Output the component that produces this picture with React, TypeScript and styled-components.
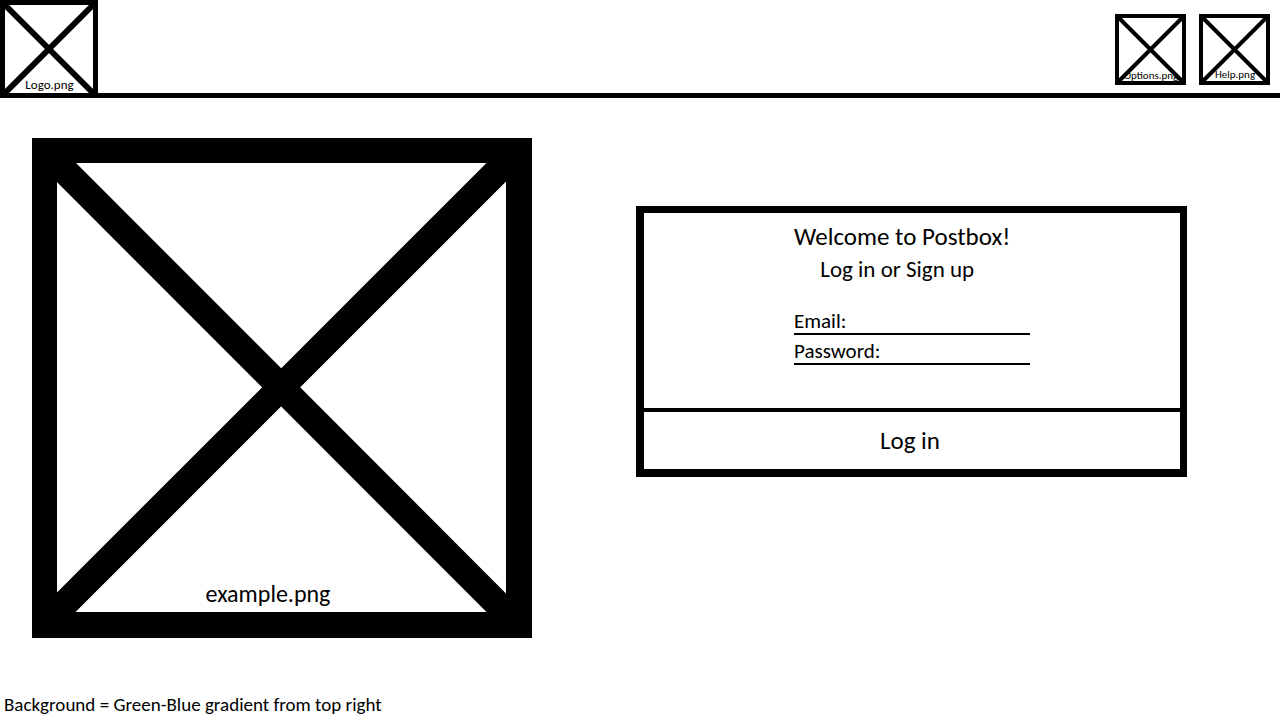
import React from "react";
import styled, { createGlobalStyle } from "styled-components";

const GlobalStyle = createGlobalStyle`
  *, *::before, *::after { box-sizing: border-box; }
  body {
    margin: 0;
    background: #fff;
    color: #000;
    font-family: Carlito, Lato, "Liberation Sans", sans-serif;
  }
`;

const Page = styled.div`
  display: flex;
  flex-direction: column;
  min-height: 100vh;
`;

const Header = styled.header`
  display: flex;
  align-items: flex-start;
  justify-content: space-between;
  box-shadow: inset 0 -5px #000;
`;

const HeaderActions = styled.nav`
  display: flex;
  gap: 13px;
  padding: 14px 10px 0 0;
`;

const HomeLink = styled.a`
  position: relative;
  display: block;
  width: 98px;
  color: inherit;
  text-decoration: none;
`;

const IconButton = styled.button`
  position: relative;
  display: block;
  width: 71px;
  padding: 0;
  border: 0;
  background: none;
  color: inherit;
  font-family: inherit;
  cursor: pointer;
`;

const Drawing = styled.svg`
  display: block;
  width: 100%;
  height: auto;
`;

const Caption = styled.span<{ $size: number; $line: number; $bottom: number }>`
  position: absolute;
  right: 0;
  bottom: ${(p) => p.$bottom}px;
  left: 1px;
  font-size: ${(p) => p.$size}px;
  line-height: ${(p) => p.$line}px;
  text-align: center;
  white-space: nowrap;
`;

const Main = styled.main`
  display: flex;
  align-items: flex-start;
  gap: 104px;
  padding: 40px 32px;
`;

const Figure = styled.figure`
  position: relative;
  flex: 0 1 500px;
  margin: 0;
`;

const FigureCaption = styled.figcaption`
  position: absolute;
  right: 28px;
  bottom: 30px;
  left: 0;
  font-size: 24px;
  line-height: 28px;
  text-align: center;
`;

const LoginCard = styled.form`
  flex: 0 1 551px;
  margin-top: 68px;
  border: solid #000;
  border-width: 7px 7px 8px 8px;
`;

const CardBody = styled.div`
  width: 236px;
  margin: 0 auto;
  padding: 8px 0 43px;
`;

const Intro = styled.div`
  width: fit-content;
  margin-bottom: 20px;
  text-align: center;
  white-space: nowrap;
`;

const Title = styled.h1`
  margin: 0;
  font-size: 25px;
  font-weight: 400;
  line-height: 32px;
`;

const Subtitle = styled.p`
  margin: 0;
  padding-right: 10px;
  font-size: 23px;
  line-height: 32px;
`;

const Field = styled.div`
  display: flex;
  align-items: flex-end;
  gap: 4px;
  height: 30px;
  border-bottom: 2px solid #000;
`;

const FieldLabel = styled.label`
  font-size: 21px;
  line-height: 24px;
`;

const FieldInput = styled.input`
  flex: 1;
  min-width: 0;
  padding: 0;
  border: 0;
  outline: 0;
  background: transparent;
  font: inherit;
  font-size: 19px;
`;

const SubmitButton = styled.button`
  display: block;
  width: 100%;
  height: 61px;
  padding: 1px 4px 0 0;
  border: 0;
  border-top: 4px solid #000;
  background: none;
  color: inherit;
  font-family: inherit;
  font-size: 25px;
  line-height: 28px;
  cursor: pointer;
`;

const Note = styled.footer`
  margin-top: auto;
  padding: 0 4px 3px;
  font-size: 19px;
  line-height: 24px;
`;

type CrossedBoxProps = { size: number; edge: number; stroke: number };

function CrossedBox({ size, edge, stroke }: CrossedBoxProps) {
  const far = size - edge / 2;
  const near = edge / 2;
  return (
    <Drawing viewBox={`0 0 ${size} ${size}`} fill="none" stroke="#000" aria-hidden="true">
      <rect x={near} y={near} width={far - near} height={far - near} strokeWidth={edge} />
      <path
        d={`M${near} ${near}L${far} ${far}M${far} ${near}L${near} ${far}`}
        strokeWidth={stroke}
      />
    </Drawing>
  );
}

export default function App() {
  return (
    <>
      <GlobalStyle />
      <Page>
        <Header>
          <HomeLink href="#">
            <CrossedBox size={98} edge={5} stroke={6} />
            <Caption $size={13} $line={16} $bottom={5}>Logo.png</Caption>
          </HomeLink>
          <HeaderActions>
            <IconButton type="button">
              <CrossedBox size={71} edge={4} stroke={4} />
              <Caption $size={11} $line={12} $bottom={3}>Options.png</Caption>
            </IconButton>
            <IconButton type="button">
              <CrossedBox size={71} edge={4} stroke={4} />
              <Caption $size={11} $line={12} $bottom={4}>Help.png</Caption>
            </IconButton>
          </HeaderActions>
        </Header>

        <Main>
          <Figure>
            <Drawing viewBox="0 0 500 500" aria-hidden="true">
              <path fillRule="evenodd" d="M0 0H500V500H0ZM25 25V474H474V25Z" />
              <path
                d="M10 10L490 490.500M10 488.500L488.500 10"
                stroke="#000"
                strokeWidth="27"
              />
            </Drawing>
            <FigureCaption>example.png</FigureCaption>
          </Figure>

          <LoginCard onSubmit={(e: React.FormEvent) => e.preventDefault()}>
            <CardBody>
              <Intro>
                <Title>Welcome to Postbox!</Title>
                <Subtitle>Log in or Sign up</Subtitle>
              </Intro>
              <Field>
                <FieldLabel htmlFor="email">Email:</FieldLabel>
                <FieldInput id="email" type="email" />
              </Field>
              <Field>
                <FieldLabel htmlFor="password">Password:</FieldLabel>
                <FieldInput id="password" type="password" />
              </Field>
            </CardBody>
            <SubmitButton type="submit">Log in</SubmitButton>
          </LoginCard>
        </Main>

        <Note>Background = Green-Blue gradient from top right</Note>
      </Page>
    </>
  );
}
